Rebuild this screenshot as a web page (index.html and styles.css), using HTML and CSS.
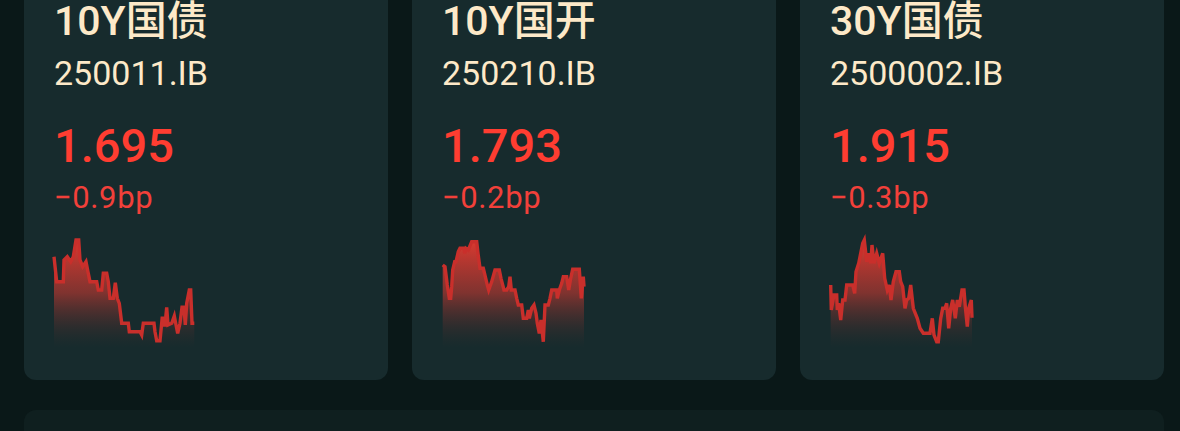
FILE: index.html
```html
<!DOCTYPE html>
<html lang="zh-CN">
<head>
<meta charset="utf-8">
<title>Bonds</title>
<link rel="stylesheet" href="styles.css">
</head>
<body>
<div class="page">
  <div class="cards">
    <div class="card">
      <div class="name">10Y国债</div>
      <div class="code">250011.IB</div>
      <div class="yield">1.695</div>
      <div class="chg">−0.9bp</div>
      <svg class="spark" width="142" height="110" viewBox="0 0 142 110">
        <defs>
          <linearGradient id="g1" x1="0" y1="0" x2="0" y2="110" gradientUnits="userSpaceOnUse">
            <stop offset="0" stop-color="#e03a30" stop-opacity="1"/>
            <stop offset="0.5" stop-color="#9a3530" stop-opacity="0.8"/>
            <stop offset="1" stop-color="#3a2c2c" stop-opacity="0"/>
          </linearGradient>
        </defs>
        <path fill="url(#g1)" d="M0,110 L0,18.7 2.7,43.7 9.3,43.7 10,22 13.3,18.7 16.7,23.7 19.3,18.7 22,2 24.7,2 26,22 28.7,28.7 32,23.7 34.3,35.3 36,43.7 42.7,43.7 44.3,52 47.7,52 49.3,35.3 52.7,35.3 54.3,43.7 56,60.3 59.3,60.3 61.3,44.7 63.3,60.3 65.3,65.3 67.7,85.3 74.3,85.3 75.3,93.7 86,93.7 87.7,97 89.3,85.3 100,85.3 101,93.7 102.7,102.7 106,102.7 108.3,78.7 109.3,87 111,87 112.7,69.3 114,87 117.7,85.3 120.3,78 121.7,85.3 123.7,95.3 126,85.3 128,69.3 130,69.3 131.3,87 132.7,65.3 135.3,52 136.7,52 138,85.3 140.3,85.3 140.3,110 Z"/>
        <polyline fill="none" stroke="#c92f2b" stroke-width="3.4" points="0,18.7 2.7,43.7 9.3,43.7 10,22 13.3,18.7 16.7,23.7 19.3,18.7 22,2 24.7,2 26,22 28.7,28.7 32,23.7 34.3,35.3 36,43.7 42.7,43.7 44.3,52 47.7,52 49.3,35.3 52.7,35.3 54.3,43.7 56,60.3 59.3,60.3 61.3,44.7 63.3,60.3 65.3,65.3 67.7,85.3 74.3,85.3 75.3,93.7 86,93.7 87.7,97 89.3,85.3 100,85.3 101,93.7 102.7,102.7 106,102.7 108.3,78.7 109.3,87 111,87 112.7,69.3 114,87 117.7,85.3 120.3,78 121.7,85.3 123.7,95.3 126,85.3 128,69.3 130,69.3 131.3,87 132.7,65.3 135.3,52 136.7,52 138,85.3 140.3,85.3"/>
      </svg>
    </div>
    <div class="card">
      <div class="name">10Y国开</div>
      <div class="code">250210.IB</div>
      <div class="yield">1.793</div>
      <div class="chg">−0.2bp</div>
      <svg class="spark" width="142" height="110" viewBox="0 0 142 110">
        <defs>
          <linearGradient id="g2" x1="0" y1="0" x2="0" y2="110" gradientUnits="userSpaceOnUse">
            <stop offset="0" stop-color="#e03a30" stop-opacity="1"/>
            <stop offset="0.5" stop-color="#9a3530" stop-opacity="0.8"/>
            <stop offset="1" stop-color="#3a2c2c" stop-opacity="0"/>
          </linearGradient>
        </defs>
        <path fill="url(#g2)" d="M0.7,110 L0.7,27 3,28.7 5.3,47 7.3,60.3 8.7,60.3 9.7,48.7 10.7,32 12.7,23.7 14,23.7 16.3,13.7 18,10.3 22,10.3 22.7,15.3 24,10.3 26.3,12 29.7,3.7 34.7,3.7 36,15.3 38,30.3 41.3,30.3 43.3,38.7 45.3,47 46.7,52 49.7,43.7 53,32 57.3,32 59,40.3 62,52 64.7,52 66.7,48.7 68,38.7 69.3,52 73,52 74.7,60.3 76.3,67 79.7,67 81.3,80.3 84.7,80.3 86.3,72 87.3,80.3 89.7,70.3 92,67 94,75.3 95.3,85.3 97.3,95.3 99,82 101.3,103.7 103,67 106.3,67 108,60.3 109.7,52 114.7,52 115.3,60.3 117.3,52 119.7,45.3 121.3,38.7 124.7,38.7 126.7,52 128.7,40.3 130.7,31.3 137.3,31.3 139.3,60.3 141.3,38.7 142,48.7 142,110 Z"/>
        <polyline fill="none" stroke="#c92f2b" stroke-width="3.4" points="0.7,27 3,28.7 5.3,47 7.3,60.3 8.7,60.3 9.7,48.7 10.7,32 12.7,23.7 14,23.7 16.3,13.7 18,10.3 22,10.3 22.7,15.3 24,10.3 26.3,12 29.7,3.7 34.7,3.7 36,15.3 38,30.3 41.3,30.3 43.3,38.7 45.3,47 46.7,52 49.7,43.7 53,32 57.3,32 59,40.3 62,52 64.7,52 66.7,48.7 68,38.7 69.3,52 73,52 74.7,60.3 76.3,67 79.7,67 81.3,80.3 84.7,80.3 86.3,72 87.3,80.3 89.7,70.3 92,67 94,75.3 95.3,85.3 97.3,95.3 99,82 101.3,103.7 103,67 106.3,67 108,60.3 109.7,52 114.7,52 115.3,60.3 117.3,52 119.7,45.3 121.3,38.7 124.7,38.7 126.7,52 128.7,40.3 130.7,31.3 137.3,31.3 139.3,60.3 141.3,38.7 142,48.7"/>
      </svg>
    </div>
    <div class="card">
      <div class="name">30Y国债</div>
      <div class="code">2500002.IB</div>
      <div class="yield">1.915</div>
      <div class="chg">−0.3bp</div>
      <svg class="spark" width="142" height="110" viewBox="0 0 142 110">
        <defs>
          <linearGradient id="g3" x1="0" y1="0" x2="0" y2="110" gradientUnits="userSpaceOnUse">
            <stop offset="0" stop-color="#e03a30" stop-opacity="1"/>
            <stop offset="0.5" stop-color="#9a3530" stop-opacity="0.8"/>
            <stop offset="1" stop-color="#3a2c2c" stop-opacity="0"/>
          </linearGradient>
        </defs>
        <path fill="url(#g3)" d="M0.7,110 L0.7,47 1.3,72 4,57 6.7,57 7.3,72 8.7,65.3 10.7,82 12.7,62 15,62 16.7,47 22.7,47 24.7,55.3 26,33.7 28.7,25.3 32.7,5.3 34.3,2 36.7,23.7 39,15.3 40.7,25.3 42,7 44,25.3 46.7,15.3 49.3,25.3 52.7,15.3 54.7,40.3 57.3,52 59.3,47 61,62 63.3,43.7 66,33.7 69.3,33.7 70.7,43.7 72.7,48.7 75,70.3 76.7,62 78.7,60.3 80.7,47 83.3,70.3 87.3,80.3 90,90.3 93.3,95.3 100,95.3 102.3,80.3 104,97 106.7,103.7 108.3,103.7 110.7,80.3 112.7,70.3 115,70.3 116.7,65.3 118.7,90.3 120.7,70.3 122.7,62 125.3,80.3 127.3,62 129.3,68.7 132,52 134,52 135.3,68.7 137.3,88.7 138.7,70.3 141.3,62 142,79.7 142,110 Z"/>
        <polyline fill="none" stroke="#c92f2b" stroke-width="3.4" points="0.7,47 1.3,72 4,57 6.7,57 7.3,72 8.7,65.3 10.7,82 12.7,62 15,62 16.7,47 22.7,47 24.7,55.3 26,33.7 28.7,25.3 32.7,5.3 34.3,2 36.7,23.7 39,15.3 40.7,25.3 42,7 44,25.3 46.7,15.3 49.3,25.3 52.7,15.3 54.7,40.3 57.3,52 59.3,47 61,62 63.3,43.7 66,33.7 69.3,33.7 70.7,43.7 72.7,48.7 75,70.3 76.7,62 78.7,60.3 80.7,47 83.3,70.3 87.3,80.3 90,90.3 93.3,95.3 100,95.3 102.3,80.3 104,97 106.7,103.7 108.3,103.7 110.7,80.3 112.7,70.3 115,70.3 116.7,65.3 118.7,90.3 120.7,70.3 122.7,62 125.3,80.3 127.3,62 129.3,68.7 132,52 134,52 135.3,68.7 137.3,88.7 138.7,70.3 141.3,62 142,79.7"/>
      </svg>
    </div>
  </div>
  <div class="panel"></div>
</div>
</body>
</html>
```

FILE: styles.css
```css
html, body {
  margin: 0;
  padding: 0;
  background: #0a1818;
  overflow: hidden;
}

.page {
  padding: 0 16px 0 24px;
  font-family: Roboto, "Noto Sans CJK SC", sans-serif;
}

.cards {
  display: grid;
  grid-template-columns: repeat(3, 1fr);
  gap: 24px;
  margin-top: -32px;
}

.card {
  background: #172b2d;
  border-radius: 12px;
  padding: 28px 30px 32px;
  display: flex;
  flex-direction: column;
  align-items: flex-start;
}

.name {
  color: #fde9c8;
  font-size: 41px;
  font-weight: 500;
  line-height: 50px;
}

.code {
  color: #fde9c8;
  font-size: 34px;
  font-weight: 400;
  line-height: 44px;
  margin-top: 5px;
}

.yield {
  color: #ff3d31;
  font-size: 47px;
  font-weight: 500;
  line-height: 56px;
  margin-top: 23px;
}

.chg {
  color: #f2403a;
  font-size: 31px;
  font-weight: 400;
  line-height: 36px;
  letter-spacing: 0.6px;
  margin-top: 6px;
}

.spark {
  display: block;
  margin-top: 22px;
  overflow: visible;
}

.panel {
  margin-top: 30px;
  height: 120px;
  background: #0f1f1f;
  border-radius: 12px;
}
```
